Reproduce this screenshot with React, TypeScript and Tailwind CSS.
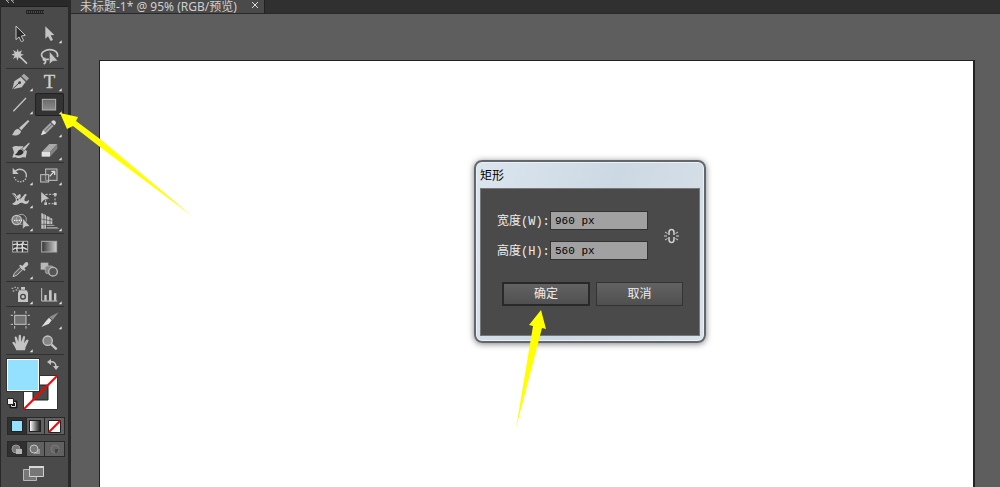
import { useState, type ReactNode } from "react";

type Tool = { name: string; more?: boolean; icon: ReactNode };

const LIGHT = "#c4c4c4";

// Every icon is drawn on an 87x69 grid, three units per pixel
const groups: Tool[][] = [
  [
    {
      name: "选择工具",
      icon: <path d="M30 12V53L39 45L46 59L53 56L46 42L58 40Z" fill="#2b2b2b" stroke={LIGHT} strokeWidth="3" />,
    },
    {
      name: "直接选择工具",
      more: true,
      icon: <path d="M31 13V50L39 43L47 57L54 54L47 40L58 39Z" fill={LIGHT} />,
    },
    {
      name: "魔棒工具",
      icon: (
        <>
          <path d="M35 11L38 21L48 16L44 26L54 29L44 33L47 42L38 37L34 47L31 37L21 42L26 32L16 29L26 25L21 15L32 21Z" fill={LIGHT} />
          <path d="M41 34L63 56" stroke={LIGHT} strokeWidth="5" />
        </>
      ),
    },
    {
      name: "套索工具",
      icon: (
        <>
          <path d="M44 43C18 46 12 24 30 17C48 9 72 18 67 36M31 40C22 40 24 48 31 46C34 51 30 55 26 57" fill="none" stroke={LIGHT} strokeWidth="5" />
          <path d="M43 19V58L53 49L69 48Z" fill={LIGHT} stroke="#4a4a4a" strokeWidth="2" />
        </>
      ),
    },
  ],
  [
    {
      name: "钢笔工具",
      more: true,
      icon: (
        <>
          <path d="M19 58L25 34L44 21L59 36L47 52Z" fill={LIGHT} />
          <path d="M46 18L54 11L69 25L62 33Z" fill="#a8a8a8" />
          <path d="M20 57L40 38" stroke="#3c3c3c" strokeWidth="3" />
          <circle cx="41" cy="38" r="4" fill="#3c3c3c" />
        </>
      ),
    },
    {
      name: "文字工具",
      more: true,
      icon: (
        <text x="43" y="53" textAnchor="middle" fontSize="56" fontFamily="Liberation Serif, serif" fill="#d0d0d0" stroke="#d0d0d0">
          T
        </text>
      ),
    },
    {
      name: "直线段工具",
      more: true,
      icon: <path d="M22 55L60 15" stroke={LIGHT} strokeWidth="4" />,
    },
    {
      name: "矩形工具",
      more: true,
      icon: <rect x="22" y="19" width="40" height="32" fill="url(#metal)" stroke="#b0b0b0" strokeWidth="3" />,
    },
    {
      name: "画笔工具",
      icon: (
        <>
          <path d="M17 57C24 54 22 40 36 38L45 45C44 57 30 61 17 57Z" fill={LIGHT} />
          <path d="M39 36L66 12L70 16L46 43Z" fill={LIGHT} />
        </>
      ),
    },
    {
      name: "铅笔工具",
      more: true,
      icon: (
        <>
          <path d="M18 58L24 42L46 20L56 30L34 52Z" fill="#a5a5a5" />
          <path d="M29 47L51 25" stroke="#666" strokeWidth="3" />
          <path d="M18 58L24 43L34 52Z" fill="#dedede" />
          <path d="M48 18L52 14Q57 11 61 16Q65 21 61 25L58 28Z" fill="#d8d8d8" />
        </>
      ),
    },
    {
      name: "斑点画笔工具",
      icon: (
        <>
          <path d="M19 25C29 17 38 24 50 21L60 34L63 37L59 56C48 52 42 60 32 56C27 53 23 57 19 55L24 40Z" fill={LIGHT} />
          <path d="M26 47C36 45 33 33 45 31L53 38C51 49 37 52 26 47Z" fill="#303030" />
          <path d="M47 29L69 10L72 14L55 36Z" fill={LIGHT} stroke="#444" strokeWidth="2" />
        </>
      ),
    },
    {
      name: "橡皮擦工具",
      more: true,
      icon: (
        <>
          <path d="M20 39L43 15H67L45 39Z" fill="#a9a9a9" />
          <path d="M20 39H45V53H20Z" fill="#e0e0e0" />
          <path d="M45 39L67 15V29L45 53Z" fill="#818181" />
        </>
      ),
    },
  ],
  [
    {
      name: "旋转工具",
      more: true,
      icon: (
        <>
          <path d="M27 22C42 9 62 19 61 36" fill="none" stroke={LIGHT} strokeWidth="4" />
          <path d="M61 36C60 59 26 59 24 35" fill="none" stroke={LIGHT} strokeWidth="4" strokeDasharray="4 4" />
          <path d="M20 11V30H38Z" fill={LIGHT} />
        </>
      ),
    },
    {
      name: "比例缩放工具",
      more: true,
      icon: (
        <>
          <rect x="32" y="15" width="34" height="34" fill="#555" stroke={LIGHT} strokeWidth="3" />
          <rect x="17" y="32" width="24" height="22" fill="#555" stroke={LIGHT} strokeWidth="3" />
          <path d="M32 32V49H41" fill="none" stroke={LIGHT} strokeWidth="2" />
          <path d="M44 37L58 22M49 22H59V33" fill="none" stroke="#ddd" strokeWidth="4" />
        </>
      ),
    },
    {
      name: "变形工具",
      more: true,
      icon: (
        <>
          <path d="M18 20C25 17 31 21 31 28L41 21C46 23 45 33 41 39L56 22C62 19 64 22 59 28C55 34 53 43 60 43C65 43 66 39 69 38C70 48 62 53 55 50C48 47 44 46 38 51C31 56 22 54 18 50C25 48 28 44 30 40C31 35 24 25 18 20Z" fill={LIGHT} />
          <path d="M22 22L37 37L54 22" fill="none" stroke="#4a4a4a" strokeWidth="2" />
          <circle cx="35" cy="38" r="4" fill="#3c3c3c" stroke="#eee" strokeWidth="2" />
        </>
      ),
    },
    {
      name: "自由变换工具",
      icon: (
        <>
          <path d="M32 22H60V50H32Z" fill="none" stroke={LIGHT} strokeWidth="3" strokeDasharray="6 4" />
          <path d="M57 18h8v8h-8zM57 46h8v8h-8zM28 46h8v8h-8z" fill={LIGHT} />
          <path d="M18 14V49L27 39L43 35Z" fill={LIGHT} stroke="#4a4a4a" />
        </>
      ),
    },
    {
      name: "形状生成器工具",
      more: true,
      icon: (
        <>
          <circle cx="32" cy="30" r="14" fill="#808080" stroke={LIGHT} strokeWidth="4" />
          <circle cx="46" cy="28" r="15" fill="none" stroke="#aaa" strokeWidth="3" />
          <path d="M24 31H48" stroke="#eee" strokeWidth="4" strokeDasharray="4 3" />
          <path d="M50 24V58L58 50L72 49Z" fill={LIGHT} stroke="#4a4a4a" strokeWidth="2" />
        </>
      ),
    },
    {
      name: "透视网格工具",
      more: true,
      icon: (
        <>
          <path d="M19 9L33 15V56H19ZM35 18L44 21V42H35ZM46 23L52 26V42H46Z" fill={LIGHT} />
          <path d="M35 44H54L61 48H35ZM35 51H66L73 56H35Z" fill="#9b9b9b" />
          <path d="M19 27L52 33M19 43H34M27 12V56" stroke="#4a4a4a" strokeWidth="2" />
        </>
      ),
    },
  ],
  [
    {
      name: "网格工具",
      icon: (
        <>
          <rect x="20" y="19" width="45" height="32" fill="#383838" stroke="#aaa" strokeWidth="3" />
          <path d="M21 30C31 22 36 33 45 28C54 23 55 32 64 28M21 44C30 32 41 44 48 38C54 35 59 45 64 42M32 20C41 29 27 36 34 50M53 20C42 30 53 38 49 51" fill="none" stroke="#ddd" strokeWidth="4" />
        </>
      ),
    },
    {
      name: "渐变工具",
      icon: <rect x="20" y="19" width="45" height="32" fill="url(#fade)" stroke="#aaa" strokeWidth="3" />,
    },
    {
      name: "吸管工具",
      more: true,
      icon: (
        <>
          <path d="M21 56L25 46L43 28L50 35L32 52Z" fill="#666" stroke={LIGHT} strokeWidth="3" />
          <path d="M39 23L44 20L49 24L57 14Q62 10 66 14Q69 19 64 24L55 31L59 35L55 39Z" fill={LIGHT} />
        </>
      ),
    },
    {
      name: "混合工具",
      icon: (
        <>
          <rect x="17" y="14" width="23" height="21" fill="#b8b8b8" />
          <rect x="31" y="24" width="25" height="23" rx="7" fill="#858585" stroke="#a5a5a5" strokeWidth="3" />
          <circle cx="54" cy="41" r="13" fill="#555" stroke="#b8b8b8" strokeWidth="4" />
        </>
      ),
    },
  ],
  [
    {
      name: "符号喷枪工具",
      more: true,
      icon: (
        <>
          <path d="M45 12H57V20H45ZM40 22H62L66 29V57H36V29Z" fill={LIGHT} />
          <circle cx="51" cy="41" r="7" fill="none" stroke="#444" strokeWidth="4" />
          <path d="M17 14h5v4h-5zM25 11h5v4h-5zM33 13h5v4h-5zM20 22h5v4h-5zM29 19h5v4h-5zM38 20h4v4h-4z" fill="#aaa" />
        </>
      ),
    },
    {
      name: "柱形图工具",
      more: true,
      icon: (
        <>
          <path d="M20 15V54H67" fill="none" stroke={LIGHT} strokeWidth="3" />
          <path d="M28 36h7v17h-7zM42 22h8v31h-8zM57 31h7v22h-7z" fill={LIGHT} />
        </>
      ),
    },
  ],
  [
    {
      name: "画板工具",
      icon: (
        <>
          <rect x="26" y="22" width="34" height="27" fill="#727272" stroke={LIGHT} strokeWidth="3" />
          <path d="M26 9V17M60 9V17M26 54V62M60 54V62M14 22H21M65 22H72M14 49H21M65 49H72" stroke={LIGHT} strokeWidth="3" />
        </>
      ),
    },
    {
      name: "切片工具",
      more: true,
      icon: (
        <>
          <path d="M19 57C29 44 34 37 42 29L50 37L42 47Z" fill="#dedede" />
          <path d="M43 27L71 13L53 36Z" fill="#8e8e8e" />
        </>
      ),
    },
    {
      name: "抓手工具",
      more: true,
      icon: (
        <path
          d="M31 58C28 49 23 42 19 36C20 30 25 32 30 39L26 20C26 15 31 15 33 20L37 33L38 14C39 10 44 10 45 14L46 33L51 17C53 13 58 15 57 20L54 37L61 27C64 23 69 26 67 31L59 48L57 58Z"
          fill={LIGHT}
        />
      ),
    },
    {
      name: "缩放工具",
      icon: (
        <>
          <circle cx="38" cy="29" r="14" fill="#858585" stroke={LIGHT} strokeWidth="4" />
          <path d="M49 40L65 55" stroke={LIGHT} strokeWidth="7" />
        </>
      ),
    },
  ],
];

function Toolbar() {
  const [active, setActive] = useState("矩形工具");

  return (
    <aside className="w-[71px] shrink-0 bg-[#4a4a4a] border-l border-r-3 border-[#292929] flex flex-col">
      {/* Gradients shared by the tool icons */}
      <svg width="0" height="0" className="absolute">
        <defs>
          <linearGradient id="metal" x1="0" y1="0" x2="0" y2="1">
            <stop offset="0" stopColor="#6a6a6a" />
            <stop offset="1" stopColor="#8c8c8c" />
          </linearGradient>
          <linearGradient id="fade">
            <stop offset="0" stopColor="#333" />
            <stop offset="1" stopColor="#d0d0d0" />
          </linearGradient>
        </defs>
      </svg>

      <div className="h-[7px] bg-[#292929] border-b border-[#1f1f1f] overflow-hidden">
        <svg width="12" height="4" viewBox="0 0 12 4" className="ml-1" fill="none" stroke="#aaa">
          <path d="M4 0L1 0L4 3M9 0L6 0L9 3" />
        </svg>
      </div>
      <div className="h-3.5 flex justify-center pt-[3px]">
        <div className="w-[18px] h-1 border-y border-[#222] bg-[repeating-linear-gradient(90deg,#222_0_1px,#4a4a4a_1px_2px)]" />
      </div>

      {groups.map((tools, i) => (
        <div key={i} className="mx-[5px] w-[58px] grid grid-cols-2 pt-px border-b border-[#303030]">
          {tools.map((tool) => (
            <button
              key={tool.name}
              type="button"
              aria-label={tool.name}
              aria-pressed={active === tool.name}
              onClick={() => setActive(tool.name)}
              className={`h-[23px] rounded-xs ${active === tool.name ? "bg-[#333] inset-ring inset-ring-[#212121]" : ""}`}
            >
              <svg width="29" height="23" viewBox="0 0 87 69">
                {tool.icon}
                {tool.more && <path d="M80 55V64H71Z" fill="#e6e6e6" />}
              </svg>
            </button>
          ))}
        </div>
      ))}

      {/* Fill and stroke swatches */}
      <div className="relative h-[62px]">
        <button type="button" aria-label="描边" className="absolute left-[22px] top-5 size-[35px]">
          <svg width="35" height="35" viewBox="0 0 35 35">
            <path d="M.5.5H34.5V34.5H.5Z" fill="#fff" stroke="#333" />
            <path d="M10 10H25V25H10Z" fill="#4a4a4a" stroke="#222" />
            <path d="M1 34L34 1" stroke="#f00" strokeWidth="2" />
          </svg>
        </button>
        <button type="button" aria-label="填色" className="absolute left-[5px] top-[3px] size-[34px] bg-[#94e0ff] border border-[#333] inset-ring inset-ring-white" />
        <button type="button" aria-label="互换填色和描边" className="absolute left-[46px] top-1">
          <svg width="12" height="11" viewBox="0 0 12 11" fill={LIGHT}>
            <path d="M4 0V6L0 3ZM6 7H12L9 11Z" />
            <path d="M3 3Q9 2 9 8" fill="none" stroke={LIGHT} strokeWidth="1.5" />
          </svg>
        </button>
        <button type="button" aria-label="默认填色和描边" className="absolute left-[5px] top-[42px]">
          <svg width="12" height="12" viewBox="0 0 12 12">
            <path d="M4 4H11V11H4Z" fill="#111" stroke="#222" />
            <path d="M5.5 5.5H9.5V9.5H5.5Z" fill="none" stroke="#ddd" />
            <path d="M1.5 1.5H7.5V7.5H1.5Z" fill="#eee" stroke="#222" />
          </svg>
        </button>
      </div>

      {/* Color, gradient, none */}
      <div className="mx-1.5 w-[58px] h-[18px] grid grid-cols-3 divide-x divide-[#292929] border border-[#292929] bg-[#616161]">
        <button type="button" aria-label="颜色" className="bg-[#303030] flex items-center justify-center">
          <span className="size-3 bg-[#94e0ff] border border-[#222]" />
        </button>
        <button type="button" aria-label="渐变" className="flex items-center justify-center">
          <span className="size-3 bg-linear-to-r from-white to-[#222] border border-[#222]" />
        </button>
        <button type="button" aria-label="无" className="flex items-center justify-center">
          <svg width="13" height="13" viewBox="0 0 13 13">
            <path d="M.5.5H12.5V12.5H.5Z" fill="#fff" stroke="#222" />
            <path d="M1 12L12 1" stroke="#f00" strokeWidth="2" />
          </svg>
        </button>
      </div>

      {/* Drawing modes */}
      <div className="mx-1.5 mt-1.5 w-[58px] h-4 grid grid-cols-3 divide-x divide-[#292929] border border-[#292929] bg-[#616161]">
        <button type="button" aria-label="正常绘图" className="bg-[#303030] flex items-center justify-center">
          <svg width="12" height="11" viewBox="0 0 12 11">
            <circle cx="5" cy="5" r="4" fill="#777" stroke="#999" />
            <path d="M5 5H11V10H5Z" fill="#b5b5b5" />
          </svg>
        </button>
        <button type="button" aria-label="背面绘图" className="flex items-center justify-center">
          <svg width="12" height="11" viewBox="0 0 12 11">
            <path d="M5 5H11V10H5Z" fill="#999" />
            <circle cx="5" cy="5" r="4" fill="#777" stroke="#c4c4c4" />
          </svg>
        </button>
        <button type="button" aria-label="内部绘图" className="flex items-center justify-center">
          <svg width="12" height="11" viewBox="0 0 12 11">
            <circle cx="6" cy="5" r="4" fill="#666" stroke="#7b7b7b" />
            <path d="M6 5H10L8 9H6Z" fill="#444" />
          </svg>
        </button>
      </div>

      <button type="button" aria-label="更改屏幕模式" className="mt-2 ml-[22px] w-[21px]">
        <svg width="21" height="17" viewBox="0 0 21 17">
          <path d="M.5 4.5H13.5V15.5H.5Z" fill="#777" stroke="#b8b8b8" />
          <path d="M6.5 1.5H20.5V11.5H6.5Z" fill="#777" stroke="#d0d0d0" />
          <path d="M6 2H21" stroke="#d8d8d8" strokeWidth="2" />
        </svg>
      </button>
    </aside>
  );
}

function RectangleDialog() {
  const [width, setWidth] = useState("960 px");
  const [height, setHeight] = useState("560 px");

  const label = "w-[53px] h-[19px] pt-0.5 leading-[19px]";
  const field = "w-[98px] h-[19px] px-1 bg-[#a1a1a1] border border-[#333] text-[11px] text-black outline-none";
  const button = "h-6 pt-0.5 bg-linear-to-b from-[#626262] to-[#505050] text-[#eee]";

  return (
    <div
      role="dialog"
      aria-labelledby="dialog-title"
      className="absolute left-[374px] top-[99px] w-[232px] px-1 pb-[5px] rounded-lg border-2 border-[#62676d] bg-linear-110 from-[#dbe6ef] via-[#ccd8e3] to-[#d9e2ea] inset-ring inset-ring-[#eaf1f6] shadow-[0_1px_6px_rgba(0,0,0,0.5)] font-['Liberation_Mono','Noto_Sans_CJK_SC',monospace] text-xs"
    >
      <h2 id="dialog-title" className="h-[26px] pt-0.5 leading-[26px] text-black">
        矩形
      </h2>
      <form onSubmit={(e) => e.preventDefault()} className="h-[148px] bg-[#4a4a4a] border border-[#777] pt-[22px] pl-4">
        <div className="flex items-center gap-4 text-[#eee]">
          <div className="flex flex-col gap-[11px]">
            <div className="flex">
              <label htmlFor="rect-width" className={label}>宽度(W):</label>
              <input id="rect-width" value={width} onChange={(e) => setWidth(e.target.value)} className={field} />
            </div>
            <div className="flex">
              <label htmlFor="rect-height" className={label}>高度(H):</label>
              <input id="rect-height" value={height} onChange={(e) => setHeight(e.target.value)} className={field} />
            </div>
          </div>
          <button type="button" aria-label="约束宽度和高度比例">
            <svg width="15" height="16" viewBox="0 0 15 16" fill="none" stroke="#d0d0d0">
              <path d="M5 7V4.5Q5 1.5 7.5 1.5Q10 1.5 10 4.5V7M5 9V11.5Q5 14.5 7.5 14.5Q10 14.5 10 11.5V9" strokeWidth="1.5" />
              <path d="M0 8H3M12 8H15M1 4L3.5 5.5M14 4L11.5 5.5M1 12L3.5 10.5M14 12L11.5 10.5" />
            </svg>
          </button>
        </div>
        <div className="mt-[22px] pl-[5px] flex gap-1.5">
          <button type="submit" className={`${button} w-[88px] border-2 border-[#292929]`}>确定</button>
          <button type="button" className={`${button} w-[87px] border border-[#333]`}>取消</button>
        </div>
      </form>
    </div>
  );
}

export default function App() {
  return (
    <div className="relative h-screen flex overflow-hidden bg-[#5e5e5e] font-['Noto_Sans','Noto_Sans_CJK_SC',sans-serif]">
      <Toolbar />

      <div className="flex-1 min-w-0 flex flex-col">
        <div className="h-3.5 shrink-0 flex bg-[#303030] border-b border-[#292929]">
          <div className="w-[194px] h-[13px] pl-[9px] pr-1.5 flex items-center justify-between bg-[#4a4a4a] border-r border-[#222] text-xs leading-3 text-[#d0d0d0] whitespace-nowrap">
            <span>未标题-1* @ 95% (RGB/预览)</span>
            <button type="button" aria-label="关闭" className="pb-1 text-[#ddd]">
              <svg width="6" height="6" viewBox="0 0 6 6" stroke="currentColor">
                <path d="M0 0L6 6M6 0L0 6" />
              </svg>
            </button>
          </div>
        </div>

        <main className="flex-1 pt-[46px] pl-7 pr-[25px] flex">
          <div className="relative flex-1 bg-white border-t border-l border-r-2 border-[#222]">
            <RectangleDialog />
          </div>
        </main>
      </div>

      {/* Pointer arrows */}
      <svg width="132" height="104" viewBox="60 112 132 104" className="absolute left-[60px] top-28 pointer-events-none" fill="#ff0">
        <path d="M60 113L78 117L76 121L100 139L192 216L100 147L73 126L67 129Z" />
      </svg>
      <svg width="32" height="118" viewBox="515 310 32 118" className="absolute left-[515px] top-[310px] pointer-events-none" fill="#ff0">
        <path d="M541 310L546 329L542 328L516 428L533 326L529 325Z" />
      </svg>
    </div>
  );
}
